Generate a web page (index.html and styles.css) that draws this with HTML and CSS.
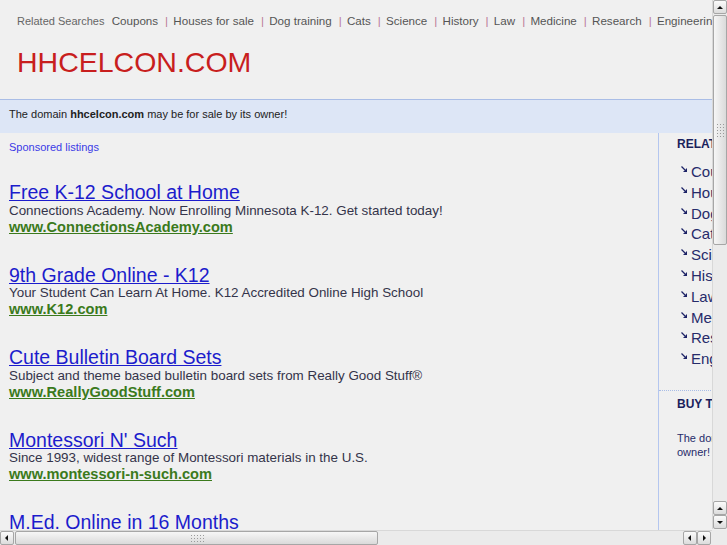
FILE: index.html
```html
<!DOCTYPE html>
<html>
<head>
<title>hhcelcon.com</title>
<link rel="stylesheet" href="styles.css">
</head>
<body>

<div class="page">
    <div class="topbar">
        <span class="rel-label">Related Searches</span>
        <a href="#">Coupons</a><span class="sep">|</span>
        <a href="#">Houses for sale</a><span class="sep">|</span>
        <a href="#">Dog training</a><span class="sep">|</span>
        <a href="#">Cats</a><span class="sep">|</span>
        <a href="#">Science</a><span class="sep">|</span>
        <a href="#">History</a><span class="sep">|</span>
        <a href="#">Law</a><span class="sep">|</span>
        <a href="#">Medicine</a><span class="sep">|</span>
        <a href="#">Research</a><span class="sep">|</span>
        <a href="#">Engineering</a>
    </div>

    <h1 class="domain">HHCELCON.COM</h1>

    <div class="notice">The domain <b>hhcelcon.com</b> may be for sale by its owner!</div>

    <div class="main">
        <div class="listings">
            <div class="sponsored">Sponsored listings</div>

            <div class="ad">
                <a class="ad-title" href="#">Free K-12 School at Home</a>
                <div class="ad-desc">Connections Academy. Now Enrolling Minnesota K-12. Get started today!</div>
                <a class="ad-url" href="#">www.ConnectionsAcademy.com</a>
            </div>

            <div class="ad">
                <a class="ad-title" href="#">9th Grade Online - K12</a>
                <div class="ad-desc">Your Student Can Learn At Home. K12 Accredited Online High School</div>
                <a class="ad-url" href="#">www.K12.com</a>
            </div>

            <div class="ad">
                <a class="ad-title" href="#">Cute Bulletin Board Sets</a>
                <div class="ad-desc">Subject and theme based bulletin board sets from Really Good Stuff&reg;</div>
                <a class="ad-url" href="#">www.ReallyGoodStuff.com</a>
            </div>

            <div class="ad">
                <a class="ad-title" href="#">Montessori N' Such</a>
                <div class="ad-desc">Since 1993, widest range of Montessori materials in the U.S.</div>
                <a class="ad-url" href="#">www.montessori-n-such.com</a>
            </div>

            <div class="ad">
                <a class="ad-title" href="#">M.Ed. Online in 16 Months</a>
            </div>
        </div>

        <div class="sidebar">
            <div class="side-head">RELATED SEARCHES</div>
            <ul class="side-list">
                <li><svg class="arrow" width="6" height="6" viewBox="0 0 6 6"><path d="M0.5 0.5 L4 4" stroke="#1c2266" stroke-width="1.2"/><path d="M6 2 L6 6 L2 6 Z" fill="#1c2266"/></svg><a href="#">Coupons</a></li>
                <li><svg class="arrow" width="6" height="6" viewBox="0 0 6 6"><path d="M0.5 0.5 L4 4" stroke="#1c2266" stroke-width="1.2"/><path d="M6 2 L6 6 L2 6 Z" fill="#1c2266"/></svg><a href="#">Houses for sale</a></li>
                <li><svg class="arrow" width="6" height="6" viewBox="0 0 6 6"><path d="M0.5 0.5 L4 4" stroke="#1c2266" stroke-width="1.2"/><path d="M6 2 L6 6 L2 6 Z" fill="#1c2266"/></svg><a href="#">Dog training</a></li>
                <li><svg class="arrow" width="6" height="6" viewBox="0 0 6 6"><path d="M0.5 0.5 L4 4" stroke="#1c2266" stroke-width="1.2"/><path d="M6 2 L6 6 L2 6 Z" fill="#1c2266"/></svg><a href="#">Cats</a></li>
                <li><svg class="arrow" width="6" height="6" viewBox="0 0 6 6"><path d="M0.5 0.5 L4 4" stroke="#1c2266" stroke-width="1.2"/><path d="M6 2 L6 6 L2 6 Z" fill="#1c2266"/></svg><a href="#">Science</a></li>
                <li><svg class="arrow" width="6" height="6" viewBox="0 0 6 6"><path d="M0.5 0.5 L4 4" stroke="#1c2266" stroke-width="1.2"/><path d="M6 2 L6 6 L2 6 Z" fill="#1c2266"/></svg><a href="#">History</a></li>
                <li><svg class="arrow" width="6" height="6" viewBox="0 0 6 6"><path d="M0.5 0.5 L4 4" stroke="#1c2266" stroke-width="1.2"/><path d="M6 2 L6 6 L2 6 Z" fill="#1c2266"/></svg><a href="#">Law</a></li>
                <li><svg class="arrow" width="6" height="6" viewBox="0 0 6 6"><path d="M0.5 0.5 L4 4" stroke="#1c2266" stroke-width="1.2"/><path d="M6 2 L6 6 L2 6 Z" fill="#1c2266"/></svg><a href="#">Medicine</a></li>
                <li><svg class="arrow" width="6" height="6" viewBox="0 0 6 6"><path d="M0.5 0.5 L4 4" stroke="#1c2266" stroke-width="1.2"/><path d="M6 2 L6 6 L2 6 Z" fill="#1c2266"/></svg><a href="#">Research</a></li>
                <li><svg class="arrow" width="6" height="6" viewBox="0 0 6 6"><path d="M0.5 0.5 L4 4" stroke="#1c2266" stroke-width="1.2"/><path d="M6 2 L6 6 L2 6 Z" fill="#1c2266"/></svg><a href="#">Engineering</a></li>
            </ul>
            <div class="side-box">
                <div class="side-head">BUY THIS DOMAIN</div>
                <p class="side-text">The domain hhcelcon.com may be for sale by its<br>owner!</p>
            </div>
        </div>
    </div>
</div>

<!-- window scrollbars -->
<div class="vscroll">
    <div class="sb-btn up"></div>
    <div class="sb-thumb"></div>
    <div class="sb-track"></div>
    <div class="sb-btn up"></div>
    <div class="sb-btn down"></div>
</div>
<div class="hscroll">
    <div class="sb-btn left"></div>
    <div class="sb-thumb"></div>
    <div class="sb-track"></div>
    <div class="sb-btn left"></div>
    <div class="sb-btn right"></div>
</div>
<div class="sb-corner"></div>

</body>
</html>
```

FILE: styles.css
```css
html, body {
    margin: 0;
    padding: 0;
    overflow: hidden;
    background: #f0f0f0;
}
body {
    font-family: "Liberation Sans", Arial, sans-serif;
}
.page {
    width: 1100px;
}

/* top related searches bar */
.topbar {
    padding: 14px 0 0 17px;
    height: 16px;
    line-height: 14px;
    white-space: nowrap;
    font-size: 11.6px;
    color: #555;
}
.topbar a {
    color: #555;
    text-decoration: none;
}
.rel-label {
    font-size: 11px;
    color: #666;
    margin-right: 4px;
}
.sep {
    color: #bb7a98;
    margin: 0 2px 0 7px;
}

.domain {
    margin: 18px 0 0 17px;
    height: 51px;
    font-size: 28.5px;
    line-height: 28.5px;
    font-weight: normal;
    color: #c81e1e;
}

.notice {
    border-top: 1px solid #a9bde6;
    background: #dde6f6;
    padding: 8px 9px 12px;
    line-height: 13px;
    font-size: 11px;
    color: #222;
}

/* listings + sidebar */
.main {
    display: flex;
}
.listings {
    width: 649px;
    padding-left: 9px;
    border-right: 1px solid #b4c6ef;
    height: 420px;
}
.sponsored {
    padding-top: 8px;
    line-height: 13px;
    font-size: 11px;
    color: #3a3ae6;
}
.ad {
    margin-top: 28.4px;
    padding-bottom: 1.4px;
}
.ad-title {
    display: block;
    width: fit-content;
    line-height: 20.6px;
    font-size: 19.5px;
    color: #1c1ccc;
}
.ad-desc {
    line-height: 16px;
    font-size: 13.4px;
    color: #34344a;
    white-space: nowrap;
}
.ad-url {
    display: block;
    width: fit-content;
    line-height: 16px;
    font-size: 14.6px;
    font-weight: bold;
    color: #3b7a1c;
}

.sidebar {
    width: 400px;
}
.side-head {
    padding: 4px 0 0 18px;
    line-height: 14px;
    font-size: 12px;
    font-weight: bold;
    color: #1a1f5c;
    white-space: nowrap;
}
.side-list {
    list-style: none;
    margin: 11px 0 20px;
    padding: 0 0 0 22px;
}
.side-list li {
    line-height: 20.8px;
    font-size: 15px;
    white-space: nowrap;
}
.side-list a {
    color: #262b6a;
    text-decoration: none;
}
.arrow {
    margin-right: 4px;
    vertical-align: 5px;
}
.side-box {
    border-top: 1px dotted #a9bde6;
    padding-top: 2px;
}
.side-text {
    margin: 20px 0 0 18px;
    line-height: 14px;
    font-size: 11px;
    color: #262b6a;
    white-space: nowrap;
}

/* fake window scrollbars, drawn over the page */
.vscroll, .hscroll {
    position: fixed;
    display: flex;
    background: #ebebeb;
}
.vscroll {
    top: 0;
    right: 0;
    width: 14px;
    height: 529px;
    flex-direction: column;
    border-left: 1px solid #d8d8d8;
}
.hscroll {
    left: 0;
    bottom: 0;
    width: 711px;
    height: 14px;
    padding-right: 2px;
    border-top: 1px solid #d8d8d8;
}
.sb-corner {
    position: fixed;
    right: 0;
    bottom: 0;
    width: 15px;
    height: 15px;
    background: #ebebeb;
}
.sb-btn {
    position: relative;
    box-sizing: border-box;
    width: 14px;
    height: 14px;
    flex: none;
    border: 1px solid #a6a6a6;
    border-radius: 2px;
    background: linear-gradient(#fbfbfb, #dcdcdc);
}
.sb-btn::after {
    content: "";
    position: absolute;
    left: 3px;
    top: 4px;
    width: 0;
    height: 0;
    border: 3px solid transparent;
}
.sb-btn.up::after {
    top: 2px;
    border-bottom-color: #111;
}
.sb-btn.down::after {
    top: 5px;
    border-top-color: #111;
}
.sb-btn.left::after {
    left: 1px;
    top: 3px;
    border-right-color: #111;
}
.sb-btn.right::after {
    left: 5px;
    top: 3px;
    border-left-color: #111;
}
.sb-thumb {
    position: relative;
    box-sizing: border-box;
    flex: none;
    border: 1px solid #a6a6a6;
    border-radius: 2px;
}
.vscroll .sb-thumb {
    height: 230px;
    margin-top: 1px;
    background: linear-gradient(90deg, #f6f6f6, #dadada);
}
.hscroll .sb-thumb {
    width: 363px;
    margin-left: 1px;
    background: linear-gradient(#f6f6f6, #dadada);
}
.sb-thumb::after {
    content: "";
    position: absolute;
    left: 50%;
    top: 50%;
    background-image: radial-gradient(circle, #9a9a9a 0.8px, transparent 1px);
    background-size: 3px 3px;
}
.vscroll .sb-thumb::after {
    width: 9px;
    height: 15px;
    margin: -7px 0 0 -4px;
}
.hscroll .sb-thumb::after {
    width: 15px;
    height: 9px;
    margin: -4px 0 0 -7px;
}
.sb-track {
    flex: 1;
}
```
